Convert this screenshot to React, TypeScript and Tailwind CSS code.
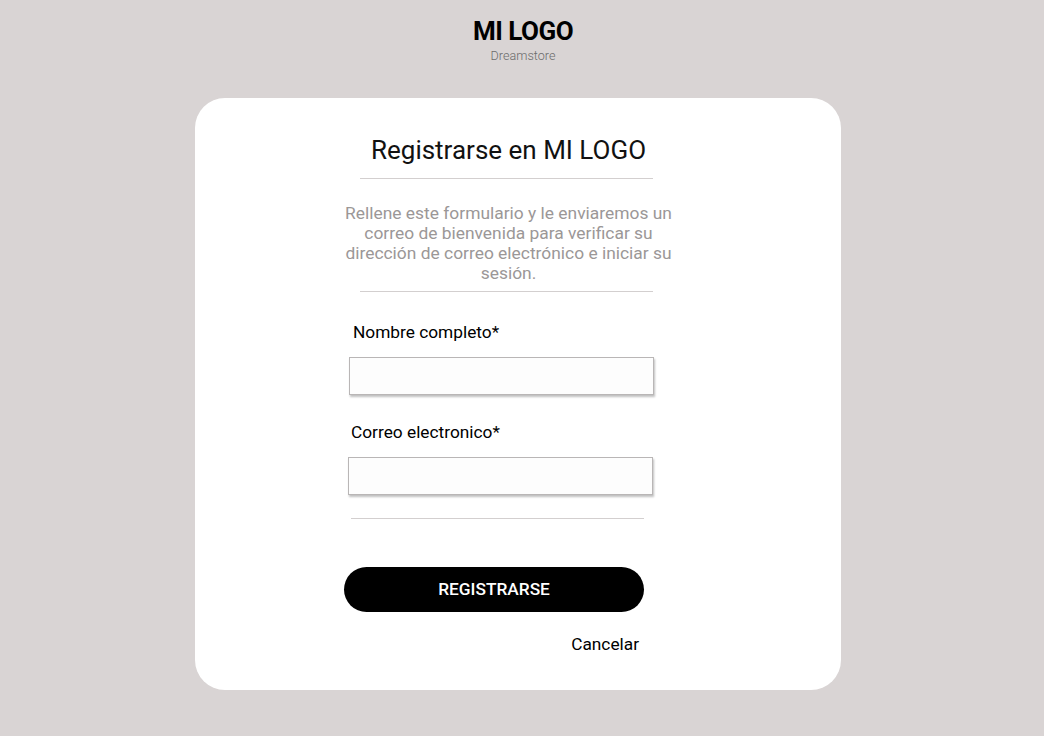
import React from 'react';

const font = { fontFamily: 'Roboto, "Liberation Sans", sans-serif' };

export default function App() {
  return (
    <div
      className="min-h-screen w-full bg-[#d9d4d4] flex flex-col items-center text-black"
      style={font}
    >
      {/* Logo */}
      <div className="flex flex-col items-center pt-[15px] ml-[2px]">
        <h1 className="text-[26px] leading-[32px] font-bold tracking-[-0.5px]">MI LOGO</h1>
        <span className="text-[12.6px] leading-[16px] font-light text-[#6b6b6b] mt-[1px]">Dreamstore</span>
      </div>

      {/* Card */}
      <div className="mt-[34px] mr-[8px] w-[646px] h-[592px] bg-white rounded-[30px] flex flex-col pl-[149px]">
        <div className="w-[293px] ml-[16px] flex flex-col items-center">
          <h2 className="mt-[37px] text-[26px] leading-[30px] text-[#111] ml-[4px] whitespace-nowrap">Registrarse en MI LOGO</h2>
          <div className="mt-[13px] w-full h-px bg-[#d3cfcf]" />
          <p className="mt-[24px] w-[334px] shrink-0 text-center text-[17.4px] leading-[20px] text-[#9b9797] ml-[4px]">
            Rellene este formulario y le enviaremos un correo de bienvenida para verificar su dirección de correo electrónico e iniciar su sesión.
          </p>
          <div className="mt-[8px] w-full h-px bg-[#d3cfcf]" />
        </div>

        <label className="mt-[30px] ml-[9px] text-[17.3px] leading-[20px]">Nombre completo*</label>
        <input
          type="text"
          className="mt-[15px] ml-[5px] w-[305px] h-[38px] bg-[#fdfdfd] border border-[#b9b6b6] shadow-[1px_2px_2px_rgba(0,0,0,0.25)] outline-none"
        />

        <label className="mt-[27px] ml-[7px] text-[17.3px] leading-[20px]">Correo electronico*</label>
        <input
          type="text"
          className="mt-[15px] ml-[4px] w-[305px] h-[38px] bg-[#fdfdfd] border border-[#b9b6b6] shadow-[1px_2px_2px_rgba(0,0,0,0.25)] outline-none"
        />

        <div className="mt-[23px] ml-[7px] w-[293px] h-px bg-[#d3cfcf]" />

        <button className="mt-[48px] w-[300px] h-[45px] rounded-full bg-black text-white text-[17.3px] font-medium">
          REGISTRARSE
        </button>

        <div className="w-[295px] flex justify-end mt-[22px]">
          <button className="text-[17.3px] leading-[20px]">Cancelar</button>
        </div>
      </div>
    </div>
  );
}
